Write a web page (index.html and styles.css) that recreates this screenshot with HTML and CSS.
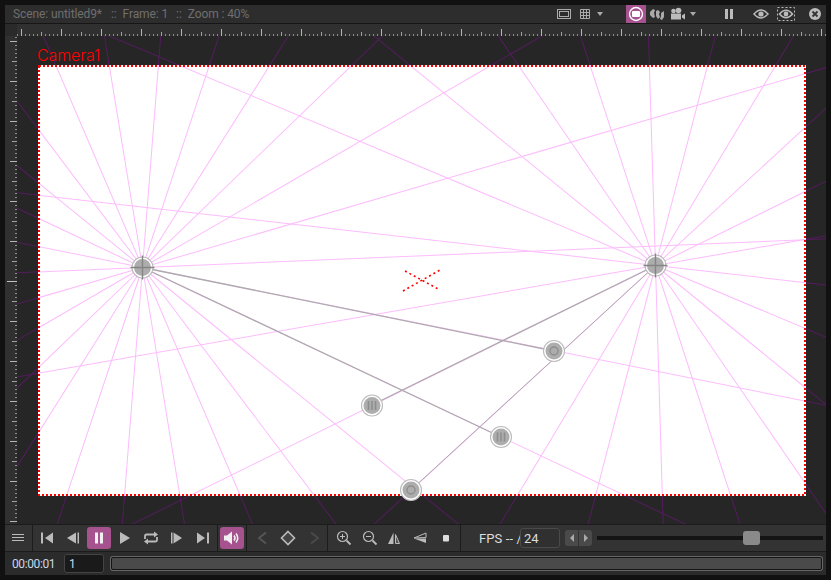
FILE: index.html
```html
<!DOCTYPE html>
<html>
<head>
    <title>Camera view</title>
    <link rel="stylesheet" href="styles.css">
</head>
<body>
    <div class="editor">
        <div class="title-bar">
            <div class="title-text">
                <span>Scene: untitled9*</span>
                <span class="title-sep">::</span>
                <span>Frame: 1</span>
                <span class="title-sep">::</span>
                <span>Zoom : 40%</span>
            </div>
            <div class="title-tools">
                <span class="tool">
                    <svg width="20" height="18" viewBox="0 0 20 18"><rect x="3.5" y="4.5" width="13" height="9" fill="none" stroke="#aaa"/><rect x="5.5" y="6.5" width="9" height="5" fill="none" stroke="#aaa"/></svg>
                </span>
                <span class="tool">
                    <svg width="20" height="18" viewBox="0 0 20 18"><path d="M5.5 4.5h9v9h-9zM8.5 4.5v9M11.5 4.5v9M5.5 7.5h9M5.5 10.5h9" fill="none" stroke="#aaa"/></svg>
                </span>
                <span class="tool tool-caret">
                    <svg width="10" height="18" viewBox="0 0 10 18"><path d="M2 7h6l-3 4z" fill="#aaa"/></svg>
                </span>
                <span class="tool tool-active group-gap">
                    <svg width="20" height="18" viewBox="0 0 20 18"><circle cx="10" cy="9" r="6.5" fill="none" stroke="#fff" stroke-width="1.4"/><rect x="6" y="6" width="8" height="6" rx="1" fill="#fff"/></svg>
                </span>
                <span class="tool tool-next">
                    <svg width="20" height="18" viewBox="0 0 20 18"><path d="M3 7l3-3 2 1-1 3 1 4-2 1-3-3zM9 6l2-1 2 2-1 2 1 3-2 2-2-3zM14 8l3-2 0 6-2 3-2-1 1-3z" fill="#aaa"/></svg>
                </span>
                <span class="tool tool-next">
                    <svg width="20" height="18" viewBox="0 0 20 18"><circle cx="5.5" cy="6" r="2.3" fill="#bbb"/><circle cx="10.5" cy="5.5" r="2.8" fill="#bbb"/><rect x="3" y="8.500" width="10" height="6" fill="#bbb"/><path d="M14 10.500l3-2v6l-3-2z" fill="#bbb"/></svg>
                </span>
                <span class="tool tool-caret">
                    <svg width="10" height="18" viewBox="0 0 10 18"><path d="M2 7h6l-3 4z" fill="#aaa"/></svg>
                </span>
                <span class="tool group-gap">
                    <svg width="20" height="18" viewBox="0 0 20 18"><rect x="6" y="4" width="3" height="10" fill="#bbb"/><rect x="11" y="4" width="3" height="10" fill="#bbb"/></svg>
                </span>
                <span class="tool eye-gap">
                    <svg width="20" height="18" viewBox="0 0 20 18"><path d="M3 9q7-8 14 0q-7 8-14 0z" fill="none" stroke="#bbb" stroke-width="1.5"/><circle cx="10" cy="9" r="2.6" fill="#bbb"/></svg>
                </span>
                <span class="tool eye-dashed">
                    <svg width="20" height="18" viewBox="0 0 20 18"><rect x="1.500" y="2.500" width="17" height="13" fill="none" stroke="#bbb" stroke-dasharray="2 2"/><path d="M3.500 9q6.500-7.500 13 0q-6.500 7.500-13 0z" fill="none" stroke="#bbb" stroke-width="1.500"/><circle cx="10" cy="9" r="2.400" fill="#bbb"/></svg>
                </span>
                <span class="tool close-gap">
                    <svg width="20" height="18" viewBox="0 0 20 18"><circle cx="10" cy="9" r="6" fill="#bbb"/><path d="M7.500 6.500l5 5M12.500 6.500l-5 5" stroke="#333" stroke-width="1.800"/></svg>
                </span>
            </div>
        </div>

        <div class="ruler-row">
            <div class="ruler-corner"></div>
            <div class="ruler-top"></div>
        </div>

        <div class="view-row">
            <div class="ruler-left"></div>
            <div class="stage">
                <svg class="stage-svg" width="809" height="488" viewBox="17 36 809 488">
                    <defs>
                        <clipPath id="frameClip"><rect x="38" y="65" width="768" height="431"/></clipPath>
                        <g id="rays" fill="none">
                            <g transform="translate(142.500 267.500)">
                                <line y2="-1000" transform="rotate(-23.2)"/>
                                <line y2="-1000" transform="rotate(-9.35)"/>
                                <line y2="-1000" transform="rotate(4.5)"/>
                                <line y2="-1000" transform="rotate(18.3)"/>
                                <line y2="-1000" transform="rotate(32.2)"/>
                                <line y2="-1000" transform="rotate(46)"/>
                                <line y2="-1000" transform="rotate(59.9)"/>
                                <line y2="-1000" transform="rotate(73.7)"/>
                                <line y2="-1000" transform="rotate(87.6)"/>
                                <line y2="-1000" transform="rotate(101.4)"/>
                                <line y2="-1000" transform="rotate(115.3)"/>
                                <line y2="-1000" transform="rotate(129.1)"/>
                                <line y2="-1000" transform="rotate(143)"/>
                                <line y2="-1000" transform="rotate(156.8)"/>
                                <line y2="-1000" transform="rotate(170.7)"/>
                                <line y2="-1000" transform="rotate(184.5)"/>
                                <line y2="-1000" transform="rotate(198.4)"/>
                                <line y2="-1000" transform="rotate(212.2)"/>
                                <line y2="-1000" transform="rotate(226.1)"/>
                                <line y2="-1000" transform="rotate(239.9)"/>
                                <line y2="-1000" transform="rotate(253.8)"/>
                                <line y2="-1000" transform="rotate(267.6)"/>
                                <line y2="-1000" transform="rotate(281.4)"/>
                                <line y2="-1000" transform="rotate(295.3)"/>
                                <line y2="-1000" transform="rotate(309.1)"/>
                                <line y2="-1000" transform="rotate(323)"/>
                            </g>
                            <g transform="translate(655.500 265.500)">
                                <line y2="-1000" transform="rotate(-1.75)"/>
                                <line y2="-1000" transform="rotate(14.6)"/>
                                <line y2="-1000" transform="rotate(31)"/>
                                <line y2="-1000" transform="rotate(47.3)"/>
                                <line y2="-1000" transform="rotate(63.7)"/>
                                <line y2="-1000" transform="rotate(80.1)"/>
                                <line y2="-1000" transform="rotate(96.5)"/>
                                <line y2="-1000" transform="rotate(112.8)"/>
                                <line y2="-1000" transform="rotate(129.2)"/>
                                <line y2="-1000" transform="rotate(145.5)"/>
                                <line y2="-1000" transform="rotate(161.9)"/>
                                <line y2="-1000" transform="rotate(178.3)"/>
                                <line y2="-1000" transform="rotate(194.6)"/>
                                <line y2="-1000" transform="rotate(211)"/>
                                <line y2="-1000" transform="rotate(227.4)"/>
                                <line y2="-1000" transform="rotate(243.7)"/>
                                <line y2="-1000" transform="rotate(260.1)"/>
                                <line y2="-1000" transform="rotate(276.5)"/>
                                <line y2="-1000" transform="rotate(292.8)"/>
                                <line y2="-1000" transform="rotate(309.2)"/>
                                <line y2="-1000" transform="rotate(325.6)"/>
                                <line y2="-1000" transform="rotate(341.9)"/>
                            </g>
                        </g>
                        <g id="nodeBase">
                            <circle r="10.500" fill="#fff" stroke="#bbb" stroke-width="1.100"/>
                            <circle r="8.500" fill="#adadad"/>
                        </g>
                        <g id="nodeCross">
                            <use href="#nodeBase"/>
                            <path d="M-12 0h24M0-12v24" stroke="#858585" stroke-width="1.400"/>
                        </g>
                        <g id="nodeBars">
                            <use href="#nodeBase"/>
                            <path d="M-3.500-4.500v9M0-4.500v9M3.500-4.500v9" stroke="#8e8e8e" stroke-width="1.600"/>
                        </g>
                        <g id="nodeRing">
                            <use href="#nodeBase"/>
                            <circle r="4" fill="none" stroke="#8e8e8e" stroke-width="1.400"/>
                        </g>
                    </defs>

                    <use href="#rays" class="rays-dark"/>
                    <rect x="38" y="65" width="768" height="431" fill="#fff"/>
                    <g clip-path="url(#frameClip)">
                        <use href="#rays" class="rays-light"/>
                    </g>
                    <path class="handle-line" d="M142.500 267.500L554 351M142.500 267.500L501 437M655.500 265.500L372 405"/>
                    <path class="handle-line handle-thin" d="M655.500 265.500L411 490"/>

                    <rect class="frame-line" x="39" y="66" width="766" height="429"/>
                    <text class="camera-label" x="37" y="61">Camera1</text>
                    <path class="center-mark" d="M405 271L440 290M403 291L440 270"/>

                    <use href="#nodeCross" x="142.500" y="267.500"/>
                    <use href="#nodeCross" x="655.500" y="265.500"/>
                    <use href="#nodeRing" x="554" y="351"/>
                    <use href="#nodeBars" x="372" y="405.500"/>
                    <use href="#nodeBars" x="501" y="437"/>
                    <use href="#nodeRing" x="411" y="490"/>
                </svg>
            </div>
        </div>

        <div class="control-bar">
            <div class="section section-menu">
                <svg width="12" height="8" viewBox="0 0 12 8"><path d="M0 .5h12M0 3.500h12M0 6.500h12" stroke="#bbb"/></svg>
            </div>
            <div class="section">
                <span class="btn"><svg width="24" height="22" viewBox="0 0 24 22"><rect x="6" y="5.500" width="2" height="11" fill="#bbb"/><path d="M10 11l8-5.500v11z" fill="#bbb"/></svg></span>
                <span class="btn"><svg width="24" height="22" viewBox="0 0 24 22"><path d="M6 11l9-5.500v11z" fill="#bbb"/><rect x="16.500" y="5.500" width="1.500" height="11" fill="#bbb"/></svg></span>
                <span class="btn btn-on"><svg width="24" height="22" viewBox="0 0 24 22"><rect x="8" y="5.500" width="3" height="11" fill="#f0f0f0"/><rect x="13" y="5.500" width="3" height="11" fill="#f0f0f0"/></svg></span>
                <span class="btn"><svg width="24" height="22" viewBox="0 0 24 22"><path d="M7 5l10 6-10 6z" fill="#bbb"/></svg></span>
                <span class="btn"><svg width="24" height="22" viewBox="0 0 24 22"><path d="M6 12V9q0-1.500 1.500-1.500H16M18 10v3q0 1.500-1.500 1.500H8" fill="none" stroke="#bbb" stroke-width="1.800"/><path d="M15 4.500l4 3-4 3zM9 11.500l-4 3 4 3z" fill="#bbb"/></svg></span>
                <span class="btn"><svg width="24" height="22" viewBox="0 0 24 22"><rect x="6" y="5.500" width="1.500" height="11" fill="#bbb"/><path d="M8.500 5.500l8.500 5.500-8.500 5.500z" fill="#bbb"/></svg></span>
                <span class="btn"><svg width="24" height="22" viewBox="0 0 24 22"><path d="M6 5.500l8 5.500-8 5.500z" fill="#bbb"/><rect x="16" y="5.500" width="2" height="11" fill="#bbb"/></svg></span>
            </div>
            <div class="section">
                <span class="btn btn-on"><svg width="24" height="22" viewBox="0 0 24 22"><path d="M4 8.500h3l5-4v13l-5-4H4z" fill="#f0f0f0"/><path d="M14 8.500q2 2.500 0 5M16 6.500q3.500 4.500 0 9" fill="none" stroke="#f0f0f0" stroke-width="1.600"/></svg></span>
            </div>
            <div class="section">
                <span class="btn"><svg width="24" height="22" viewBox="0 0 24 22"><path d="M17 5.500l-7 5.500 7 5.500" fill="none" stroke="#555" stroke-width="2"/></svg></span>
                <span class="btn"><svg width="24" height="22" viewBox="0 0 24 22"><path d="M13 4.500l6.500 6.500-6.500 6.500L6.500 11z" fill="#444" stroke="#bbb" stroke-width="1.600"/></svg></span>
                <span class="btn"><svg width="24" height="22" viewBox="0 0 24 22"><path d="M10 5.500l7 5.500-7 5.500" fill="none" stroke="#4a4a4a" stroke-width="2"/></svg></span>
            </div>
            <div class="section">
                <span class="btn"><svg width="24" height="22" viewBox="0 0 24 22"><circle cx="12.500" cy="9.500" r="5" fill="none" stroke="#bbb" stroke-width="1.200"/><path d="M10 9.500h5M12.500 7v5" stroke="#bbb"/><path d="M16.500 13.500l4 4" stroke="#bbb" stroke-width="1.800"/></svg></span>
                <span class="btn"><svg width="24" height="22" viewBox="0 0 24 22"><circle cx="12.500" cy="9.500" r="5" fill="none" stroke="#bbb" stroke-width="1.200"/><path d="M10 9.500h5" stroke="#bbb"/><path d="M16.500 13.500l4 4" stroke="#bbb" stroke-width="1.800"/></svg></span>
                <span class="btn"><svg width="24" height="22" viewBox="0 0 24 22"><path d="M11.500 5.500V17H6z" fill="#bbb"/><path d="M13.500 7.500V16.500H17.500z" fill="#555" stroke="#bbb"/></svg></span>
                <span class="btn"><svg width="24" height="22" viewBox="0 0 24 22"><path d="M6 11l12-5v4.500z" fill="none" stroke="#bbb"/><path d="M6 11.500h12V16z" fill="#bbb"/></svg></span>
                <span class="btn"><svg width="24" height="22" viewBox="0 0 24 22"><rect x="9" y="8" width="6" height="6.500" rx="1" fill="#ddd"/></svg></span>
            </div>
            <div class="fps-section">
                <span class="fps-label">FPS -- /</span>
                <input class="fps-input" value="24">
                <div class="stepper">
                    <span class="step step-left"></span>
                    <span class="step step-right"></span>
                </div>
                <div class="slider"><div class="slider-thumb"></div></div>
            </div>
        </div>

        <div class="time-bar">
            <span class="time-code">00:00:01</span>
            <input class="frame-input" value="1">
            <div class="progress"></div>
        </div>
    </div>
</body>
</html>
```

FILE: styles.css
```css
* {
    box-sizing: border-box;
}
html, body {
    margin: 0;
    height: 580px;
    overflow: hidden;
    background-color: #111;
}
body {
    font-family: Roboto, Arial, sans-serif;
    font-size: 12px;
}
svg {
    display: block;
}
.editor {
    display: flex;
    flex-direction: column;
    height: 570px;
    margin: 5px;
    width: 821px;
}

/* top strip */
.title-bar {
    display: flex;
    justify-content: space-between;
    height: 19px;
    background-color: #2d2d2d;
    border-bottom: 1px solid #161616;
}
.title-text {
    display: flex;
    align-items: center;
    padding-left: 8px;
    color: #6f6f6f;
    letter-spacing: -0.1px;
    white-space: nowrap;
}
.title-sep {
    margin: 0 6px 0 9px;
}
.title-sep + span {
    margin-right: -1px;
}
.title-tools {
    display: flex;
    padding-right: 1px;
}
.tool {
    display: block;
    width: 20px;
    height: 18px;
    margin-left: 1px;
}
.tool-caret {
    width: 10px;
    margin-left: 0;
}
.tool-active {
    background-color: #a5528f;
}
.group-gap {
    margin-left: 21px;
}
.tool-next {
    margin-left: 1px;
}
.eye-gap {
    margin-left: 12px;
}
.eye-dashed {
    margin-left: 5px;
}
.close-gap {
    margin-left: 9px;
}

/* rulers */
.ruler-row {
    display: flex;
    height: 12px;
}
.ruler-corner {
    width: 12px;
    background-color: #2a2a2a;
}
.ruler-top {
    flex: 1;
    background-color: #303030;
    background-image:
        linear-gradient(90deg, #b5b5b5 1px, transparent 1px),
        linear-gradient(90deg, #a0a0a0 1px, transparent 1px),
        linear-gradient(90deg, #8c8c8c 1px, transparent 1px);
    background-size: 40px 7px, 40px 4px, 4px 2px;
    background-position: 4px bottom, 24px bottom, 0 bottom;
    background-repeat: repeat-x;
}
.view-row {
    display: flex;
    height: 488px;
}
.ruler-left {
    width: 12px;
    background-color: #303030;
    background-image:
        linear-gradient(#c0c0c0 1px, transparent 1px),
        linear-gradient(#b5b5b5 1px, transparent 1px),
        linear-gradient(#a0a0a0 1px, transparent 1px),
        linear-gradient(#8c8c8c 1px, transparent 1px);
    background-size: 10px 1px, 7px 40px, 5px 40px, 2px 4px;
    background-position: right 245px, right 5px, right 25px, right 1px;
    background-repeat: no-repeat, repeat-y, repeat-y, repeat-y;
}
.stage {
    flex: 1;
    background-color: #262626;
}
.stage-svg {
    overflow: hidden;
}
.rays-dark {
    stroke: #541c5e;
    stroke-width: 1;
}
.rays-light {
    stroke: #fdbcfd;
    stroke-width: 1;
}
.handle-line {
    fill: none;
    stroke: #aeaaae;
    stroke-width: 1.3;
}
.handle-thin {
    stroke-width: 1;
}
.frame-line {
    fill: none;
    stroke: #f00;
    stroke-width: 2;
    stroke-dasharray: 2 2;
    shape-rendering: crispEdges;
}
.camera-label {
    fill: #f00;
    font-family: Inter, "Liberation Sans", sans-serif;
    font-size: 16px;
    font-weight: 300;
    letter-spacing: -0.1px;
}
.center-mark {
    fill: none;
    stroke: #f00;
    stroke-width: 1.6;
    stroke-dasharray: 2 3;
}

/* transport */
.control-bar {
    display: flex;
    height: 28px;
    background-color: #333;
    border-top: 1px solid #1c1c1c;
    border-bottom: 1px solid #1c1c1c;
}
.section {
    display: flex;
    align-items: center;
    gap: 2px;
    padding: 0 2px;
    border-right: 1px solid #1c1c1c;
}
.section-menu {
    width: 28px;
    padding-left: 7px;
}
.btn {
    display: block;
    width: 24px;
    height: 22px;
    border-radius: 3px;
}
.btn-on {
    background-color: #a5528f;
}
.fps-section {
    display: flex;
    align-items: center;
    flex: 1;
    padding-left: 18px;
    color: #ddd;
}
.fps-label {
    width: 41px;
    font-size: 13px;
    letter-spacing: 0.1px;
    white-space: nowrap;
}
.fps-input {
    width: 40px;
    height: 20px;
    padding: 0 3px;
    color: #ddd;
    font: inherit;
    font-size: 13px;
    background-color: #303030;
    border: 1px solid #4a4a4a;
    border-radius: 3px;
}
.stepper {
    display: flex;
    gap: 1px;
    margin-left: 5px;
    width: 27px;
    height: 16px;
}
.step {
    position: relative;
    flex: 1;
    background-color: #4a4a4a;
}
.step-left {
    border-radius: 3px 0 0 3px;
}
.step-right {
    border-radius: 0 3px 3px 0;
}
.step::after {
    content: "";
    position: absolute;
    top: 4px;
    border: 4px solid transparent;
}
.step-left::after {
    left: 5px;
    border-left-width: 0;
    border-right-color: #aaa;
}
.step-right::after {
    left: 5px;
    border-right-width: 0;
    border-left-color: #aaa;
}
.slider {
    position: relative;
    width: 226px;
    height: 4px;
    margin-left: 5px;
    background-color: #141414;
}
.slider-thumb {
    position: absolute;
    left: 146px;
    top: -5px;
    width: 17px;
    height: 14px;
    background-color: #8a8a8a;
    border-radius: 3px;
}

/* time strip */
.time-bar {
    display: flex;
    align-items: center;
    height: 23px;
    background-color: #2b2b2b;
}
.time-code {
    width: 59px;
    padding-left: 7px;
    color: #c8d8e8;
    letter-spacing: -0.4px;
    white-space: nowrap;
}
.frame-input {
    width: 40px;
    height: 19px;
    padding: 0 4px;
    color: #c8d8e8;
    font: inherit;
    background-color: #1a1a1a;
    border: 1px solid #444;
    border-radius: 3px;
}
.progress {
    width: 711px;
    height: 13px;
    margin-left: 7px;
    background-color: #4a4a4a;
    border: 1px solid #141414;
    border-radius: 2px;
    box-shadow: 0 0 0 1px #666;
}
```
